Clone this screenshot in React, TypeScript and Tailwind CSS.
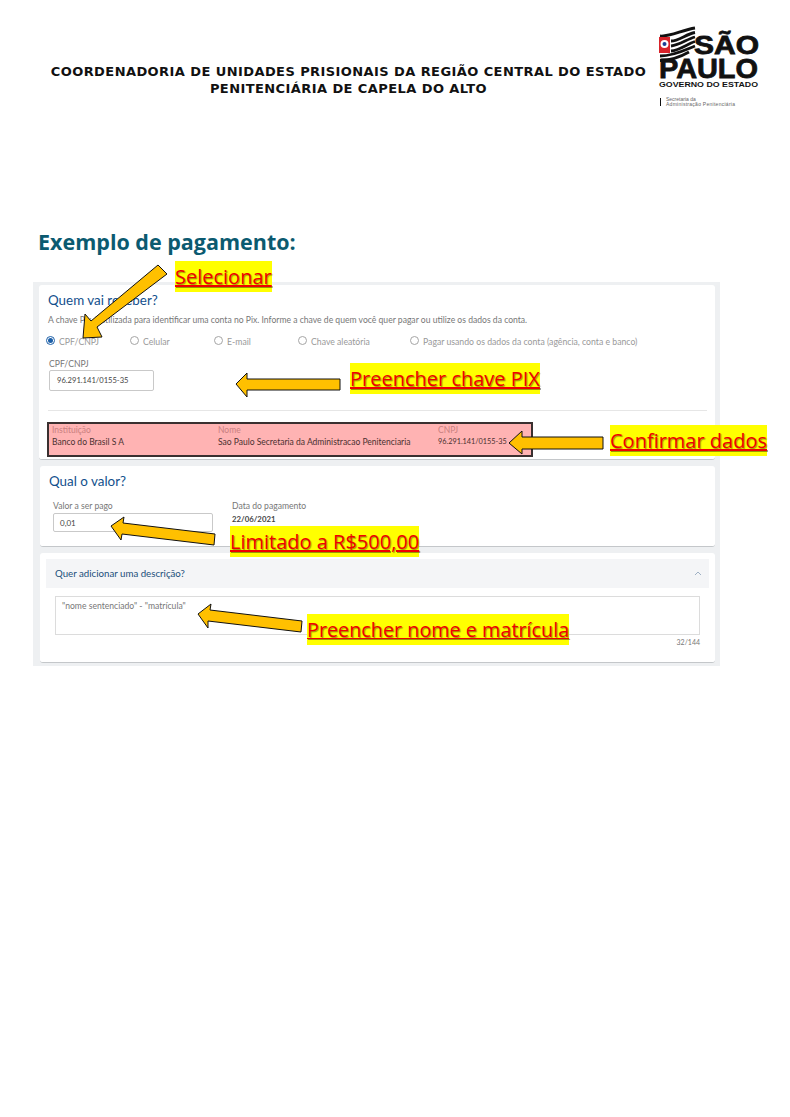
const radios = [
  { label: "CPF/CNPJ", width: "w-[84px]", checked: true },
  { label: "Celular", width: "w-[84px]", checked: false },
  { label: "E-mail", width: "w-[84px]", checked: false },
  { label: "Chave aleatória", width: "w-[112px]", checked: false },
  { label: "Pagar usando os dados da conta (agência, conta e banco)", width: "", checked: false },
];

const arrows = [
  "158,265 167,274 97,327 102,337 83,338 85,314 91,321",
  "236,384 247,373 247,379 340,379 340,390 247,390 247,397",
  "509,443 522,431 522,437 603,437 603,449 522,449 522,454",
  "111,526 124,517 123,523 215,534 214,545 122,534 121,540",
  "198,614 211,604 210,610 302,621 301,632 208,621 208,628",
];

const notes = [
  { text: "Selecionar", pos: "left-[175px] top-[261px] text-[20px]" },
  { text: "Preencher chave PIX", pos: "left-[350px] top-[363px] text-[20px]" },
  { text: "Confirmar dados", pos: "left-[610px] top-[425px] text-[20px]" },
  { text: "Limitado a R$500,00", pos: "left-[230px] top-[526px] text-[20px]" },
  { text: "Preencher nome e matrícula", pos: "left-[307px] top-[614px] text-[19.8px]" },
];

function Logo() {
  return (
    <svg width="104" height="88" viewBox="0 0 104 88" className="shrink-0">
      <g fill="none" stroke="#111" strokeWidth="2.8">
        <path d="M2 11 C12 12 24 5 37 3" />
        <path d="M13 16 C21 16 28 9 37 7.5" />
        <path d="M13 21 C22 20 29 14 37 12" />
        <path d="M13 26 C22 25 29 19 37 16.5" />
        <path d="M2 31 C16 31 27 25 37 21" />
        <path d="M2 35.5 C14 35.5 24 31 31 27" />
      </g>
      <rect x="1" y="12" width="11" height="16" fill="#d8232a" />
      <circle cx="6.5" cy="19" r="4" fill="#fff" />
      <circle cx="6.5" cy="19" r="2" fill="#1c3f94" />
      <text x="36" y="29" fontFamily="Liberation Sans" fontWeight="700" fontSize="26" textLength="65" lengthAdjust="spacingAndGlyphs" fill="#111" stroke="#111" strokeWidth="0.8">SÃO</text>
      <text x="1" y="53" fontFamily="Liberation Sans" fontWeight="700" fontSize="28" textLength="99" lengthAdjust="spacingAndGlyphs" fill="#111" stroke="#111" strokeWidth="0.8">PAULO</text>
      <text x="1" y="62" fontFamily="Liberation Sans" fontWeight="700" fontSize="7.5" textLength="99" lengthAdjust="spacingAndGlyphs" fill="#111">GOVERNO DO ESTADO</text>
      <rect x="2" y="73" width="1" height="8" fill="#111" />
      <text x="8" y="76" fontFamily="Liberation Sans" fontSize="5" fill="#666">Secretaria da</text>
      <text x="8" y="81" fontFamily="Liberation Sans" fontSize="5" textLength="69" fill="#666">Administração Penitenciária</text>
    </svg>
  );
}

function Radio({ checked }: { checked: boolean }) {
  return (
    <span className={`mt-[2px] flex h-[9px] w-[9px] items-center justify-center rounded-full border ${checked ? "border-[#1c5fa8]" : "border-[#a5a5a5]"}`}>
      {checked && <span className="h-[5px] w-[5px] rounded-full bg-[#1c5fa8]" />}
    </span>
  );
}

export default function App() {
  return (
    <div className="relative h-[1117px] w-[790px] overflow-hidden bg-white font-['Lato',sans-serif]">
      <div className="flex items-start pt-[25px]">
        <div className="ml-[50px] mt-[38px] w-[597px] text-center font-['DejaVu_Sans',sans-serif] text-[13px] font-bold leading-[17px] tracking-[0.42px] text-[#111]">
          <p className="whitespace-nowrap">COORDENADORIA DE UNIDADES PRISIONAIS DA REGIÃO CENTRAL DO ESTADO</p>
          <p>PENITENCIÁRIA DE CAPELA DO ALTO</p>
        </div>
        <div className="ml-[11px]">
          <Logo />
        </div>
      </div>

      <h1 className="ml-[38px] mt-[114px] font-['Open_Sans',sans-serif] text-[21.5px] font-bold leading-[30px] text-[#0b5a70]">
        Exemplo de pagamento:
      </h1>

      <div className="ml-[33px] mt-[25px] flex h-[384px] w-[687px] flex-col bg-[#eef0f2] pl-[6px] pr-[5px] pt-[3px]">
        <section className="h-[175px] rounded-[3px] border-b border-[#c4c7ca] bg-white pl-[9px] pr-[8px] pt-[6px]">
          <h2 className="text-[13.4px] leading-[18px] text-[#124f8c]">Quem vai receber?</h2>
          <p className="mt-[5px] text-[8.6px] leading-[12px] text-[#777]">
            A chave Pix é utilizada para identificar uma conta no Pix. Informe a chave de quem você quer pagar ou utilize os dados da conta.
          </p>
          <div className="-ml-[2px] mt-[8px] flex items-start text-[8.7px] leading-[12px] text-[#999]">
            {radios.map((radio) => (
              <label key={radio.label} className={`flex items-start gap-[4px] ${radio.width}`}>
                <Radio checked={radio.checked} />
                <span className="pt-[2px]">{radio.label}</span>
              </label>
            ))}
          </div>
          <div className="ml-[1px] mt-[10px] text-[8.6px] leading-[12px] text-[#777]">CPF/CNPJ</div>
          <div className="ml-[1px] flex h-[21px] w-[105px] items-center rounded-[2px] border border-[#c9c9c9] pl-[7px] text-[7.6px] text-[#444]">
            96.291.141/0155-35
          </div>
          <div className="mt-[19px] h-px bg-[#e6e6e6]" />
          <div className="-ml-[1px] mt-[11px] grid h-[35px] w-[486px] grid-cols-[166px_220px_1fr] border-2 border-[#3a3030] bg-[#ffb3b3] pl-[3px] text-[8.5px] leading-[12px]">
            <div>
              <div className="text-[#c98080]">Instituição</div>
              <div className="text-[#4a3030]">Banco do Brasil S A</div>
            </div>
            <div>
              <div className="text-[#c98080]">Nome</div>
              <div className="whitespace-nowrap text-[#4a3030]">Sao Paulo Secretaria da Administracao Penitenciaria</div>
            </div>
            <div>
              <div className="text-[#c98080]">CNPJ</div>
              <div className="text-[7.3px] text-[#4a3030]">96.291.141/0155-35</div>
            </div>
          </div>
        </section>

        <section className="ml-px mt-[6px] h-[81px] rounded-[3px] border-b border-[#c4c7ca] bg-white pl-[9px] pt-[6px]">
          <h2 className="text-[13.4px] leading-[18px] text-[#124f8c]">Qual o valor?</h2>
          <div className="mt-[10px] flex">
            <div className="ml-[4px] w-[179px]">
              <div className="text-[8.6px] leading-[12px] text-[#777]">Valor a ser pago</div>
              <div className="mt-[1px] flex h-[19px] w-[160px] items-center rounded-[2px] border border-[#c9c9c9] pl-[6px] text-[8px] text-[#444]">
                0,01
              </div>
            </div>
            <div>
              <div className="text-[8.6px] leading-[12px] text-[#777]">Data do pagamento</div>
              <div className="mt-px text-[7.8px] font-bold leading-[12px] text-[#444]">22/06/2021</div>
            </div>
          </div>
        </section>

        <section className="ml-px mt-[6px] h-[110px] rounded-[3px] border-b border-[#c4c7ca] bg-white px-[6px] pt-[6px]">
          <div className="flex h-[29px] items-center justify-between bg-[#f4f5f7] pl-[9px] pr-[7px] text-[9.7px] text-[#1b4f7a]">
            <span>Quer adicionar uma descrição?</span>
            <svg width="8" height="5" viewBox="0 0 8 5" fill="none" stroke="#9fb1c4" strokeWidth="1">
              <path d="M1 4 L4 1 L7 4" />
            </svg>
          </div>
          <div className="ml-[9px] mr-[9px] mt-[8px] h-[39px] border border-[#dcdcdc] pl-[6px] pt-[3px] text-[8.6px] leading-[12px] text-[#777]">
            "nome sentenciado" - "matrícula"
          </div>
          <div className="mr-[9px] mt-[1px] text-right text-[7px] leading-[12px] text-[#777]">32/144</div>
        </section>
      </div>

      <svg width="790" height="1117" viewBox="0 0 790 1117" className="pointer-events-none absolute left-0 top-0">
        {arrows.map((points) => (
          <polygon key={points} points={points} fill="#ffc000" stroke="#111" strokeWidth="1" />
        ))}
      </svg>

      {notes.map((note) => (
        <span
          key={note.text}
          className={`absolute whitespace-nowrap bg-[#ffff00] font-['Open_Sans',sans-serif] leading-[31px] text-[#f00000] underline [text-shadow:1px_1px_1px_#00000066] ${note.pos}`}
        >
          {note.text}
        </span>
      ))}
    </div>
  );
}
